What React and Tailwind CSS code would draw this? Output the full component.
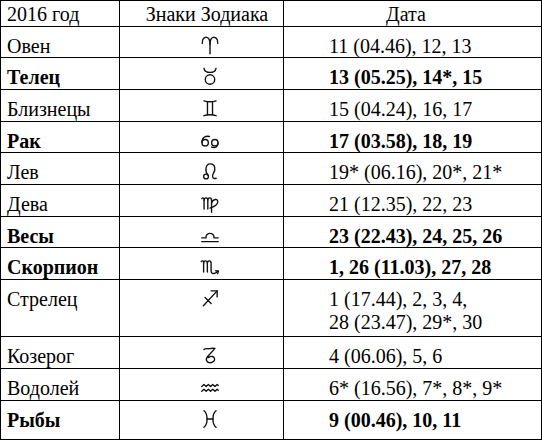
import React from "react";

const S = { fill: "none", stroke: "#111", strokeWidth: 1.25, strokeLinecap: "round", strokeLinejoin: "round" };

const icons = {
  aries: (
    <g {...S}>
      <path d="M3 8.5 C2.6 4.6 5 2.6 7 3 C9 3.4 10 5.8 10 9.5 V18" />
      <path d="M17 8.5 C17.4 4.6 15 2.6 13 3 C11 3.4 10 5.8 10 9.5" />
    </g>
  ),
  taurus: (
    <g {...S}>
      <circle cx="10" cy="13.2" r="4.3" />
      <path d="M4.5 3 C5.5 8 14.5 8 15.5 3" />
    </g>
  ),
  gemini: (
    <g {...S}>
      <path d="M4.5 3.5 Q10 5.2 15.5 3.5" />
      <path d="M4.5 17 Q10 15.3 15.5 17" />
      <path d="M7.7 4.6 V15.9" />
      <path d="M12.3 4.6 V15.9" />
    </g>
  ),
  cancer: (
    <g {...S}>
      <circle cx="5.6" cy="12.4" r="2.9" />
      <path d="M2.7 12.4 C2.5 7.5 6 6 9.5 6.8" />
      <circle cx="14.4" cy="12.4" r="2.9" />
      <path d="M17.3 12.4 C17.5 16 15 17.6 11.5 16.4" />
    </g>
  ),
  leo: (
    <g {...S}>
      <circle cx="6.4" cy="15" r="2.2" />
      <path d="M8.2 13.8 C5.2 10.5 5.6 3.5 10.3 3.5 C15 3.5 15.3 9 13 12.3 C11.6 14.4 12.2 17.6 15.6 16.6" />
    </g>
  ),
  virgo: (
    <g {...S}>
      <path d="M2.5 6 C3.5 4.8 4.6 5.4 4.6 7 V15.5" />
      <path d="M4.6 7.4 C4.6 4.6 8 4.6 8 7.4 V15.5" />
      <path d="M8 7.4 C8 4.6 11.4 4.6 11.4 7.4 V18.5" />
      <path d="M11.4 10 C12.5 6.2 17.6 5.5 17 9.2 C16.5 12.6 13.6 13.6 10 14.6" />
    </g>
  ),
  libra: (
    <g {...S}>
      <path d="M2.5 12.6 H6.4 C5.6 7.2 14.4 7.2 13.6 12.6 H17.5" />
      <path d="M2.5 16 H17.5" />
    </g>
  ),
  scorpio: (
    <g {...S}>
      <path d="M2 6 C3 4.8 4.2 5.4 4.2 7 V15.5" />
      <path d="M4.2 7.4 C4.2 4.6 7.6 4.6 7.6 7.4 V15.5" />
      <path d="M7.6 7.4 C7.6 4.6 11 4.6 11 7.4 V14.5 C11 17 13 17.4 15.2 16.2 L17.6 14.6" />
      <path d="M15.2 14.3 L17.6 14.6 L17 16.9" />
    </g>
  ),
  sagittarius: (
    <g {...S}>
      <path d="M4 17 L16.5 3.5" />
      <path d="M11 3.5 H16.5 V9" />
      <path d="M5.5 9.5 L11 15" />
    </g>
  ),
  capricorn: (
    <g {...S}>
      <path d="M4.5 5 C6 3.5 7.5 4.6 9.5 4.2 C11.5 3.8 13 3.6 14.5 4 L7.5 11.8 C6 13.6 6.6 17 9.8 17 C13 17 14.6 15 14.1 13 C13.6 11 10.8 10.7 8.5 12.4" />
    </g>
  ),
  aquarius: (
    <g {...S}>
      <path d="M2.5 9.6 L4.5 7.8 L6.5 9.6 L8.5 7.8 L10.5 9.6 L12.5 7.8 L14.5 9.6 L16.5 7.8 L17.5 8.7" />
      <path d="M2.5 13.8 L4.5 12 L6.5 13.8 L8.5 12 L10.5 13.8 L12.5 12 L14.5 13.8 L16.5 12 L17.5 12.9" />
    </g>
  ),
  pisces: (
    <g {...S}>
      <path d="M4.5 2.5 C8.3 5.5 8.3 14.5 4.5 17.5" />
      <path d="M15.5 2.5 C11.7 5.5 11.7 14.5 15.5 17.5" />
      <path d="M7.2 10 H12.8" />
    </g>
  ),
};

const rows = [
  { name: "Овен", sign: "aries", date: ["11 (04.46), 12, 13"], bold: false, h: "h-[31px]" },
  { name: "Телец", sign: "taurus", date: ["13 (05.25), 14*, 15"], bold: true, h: "h-[32px]" },
  { name: "Близнецы", sign: "gemini", date: ["15 (04.24), 16, 17"], bold: false, h: "h-[32px]" },
  { name: "Рак", sign: "cancer", date: ["17 (03.58), 18, 19"], bold: true, h: "h-[31px]" },
  { name: "Лев", sign: "leo", date: ["19* (06.16), 20*, 21*"], bold: false, h: "h-[32px]" },
  { name: "Дева", sign: "virgo", date: ["21 (12.35), 22, 23"], bold: false, h: "h-[32px]" },
  { name: "Весы", sign: "libra", date: ["23 (22.43), 24, 25, 26"], bold: true, h: "h-[31px]" },
  { name: "Скорпион", sign: "scorpio", date: ["1, 26 (11.03), 27, 28"], bold: true, h: "h-[32px]" },
  { name: "Стрелец", sign: "sagittarius", date: ["1 (17.44), 2, 3, 4,", "28 (23.47), 29*, 30"], bold: false, h: "h-[57px]" },
  { name: "Козерог", sign: "capricorn", date: ["4 (06.06), 5, 6"], bold: false, h: "h-[32px]" },
  { name: "Водолей", sign: "aquarius", date: ["6* (16.56), 7*, 8*, 9*"], bold: false, h: "h-[32px]" },
  { name: "Рыбы", sign: "pisces", date: ["9 (00.46), 10, 11"], bold: true, h: "h-[39px]" },
];

export default function App() {
  return (
    <div className="w-[542px] h-[440px] bg-white text-black overflow-hidden font-['Liberation_Serif',serif] text-[20px] leading-[20px]">
      <table className="table-fixed border-collapse w-[541px]">
        <colgroup>
          <col className="w-[119px]" />
          <col className="w-[164px]" />
          <col className="w-[258px]" />
        </colgroup>
        <thead>
          <tr className="h-[26px]">
            <th className="border border-black font-normal text-left align-top pl-[6px] pt-[3px]">2016 год</th>
            <th className="border border-black font-normal text-center align-top pl-[11px] pt-[3px]">Знаки Зодиака</th>
            <th className="border border-black font-normal text-center align-top pr-[13px] pt-[3px]">Дата</th>
          </tr>
        </thead>
        <tbody>
          {rows.map((r) => (
            <tr key={r.name} className={r.h}>
              <td className={`border border-black align-top pl-[6px] pt-[9px] ${r.bold ? "font-bold" : ""}`}>{r.name}</td>
              <td className="border border-black align-top pt-[7px]">
                <div className="flex justify-center pl-[16px]">
                  <svg width="22" height="22" viewBox="0 0 20 20" className="block">
                    {icons[r.sign]}
                  </svg>
                </div>
              </td>
              <td
                className={`border border-black align-top pl-[45px] ${r.date.length > 1 ? "pt-[8px] leading-[23px]" : "pt-[9px]"} ${r.bold ? "font-bold" : ""}`}
              >
                {r.date.map((d) => (
                  <div key={d}>{d}</div>
                ))}
              </td>
            </tr>
          ))}
        </tbody>
      </table>
    </div>
  );
}
